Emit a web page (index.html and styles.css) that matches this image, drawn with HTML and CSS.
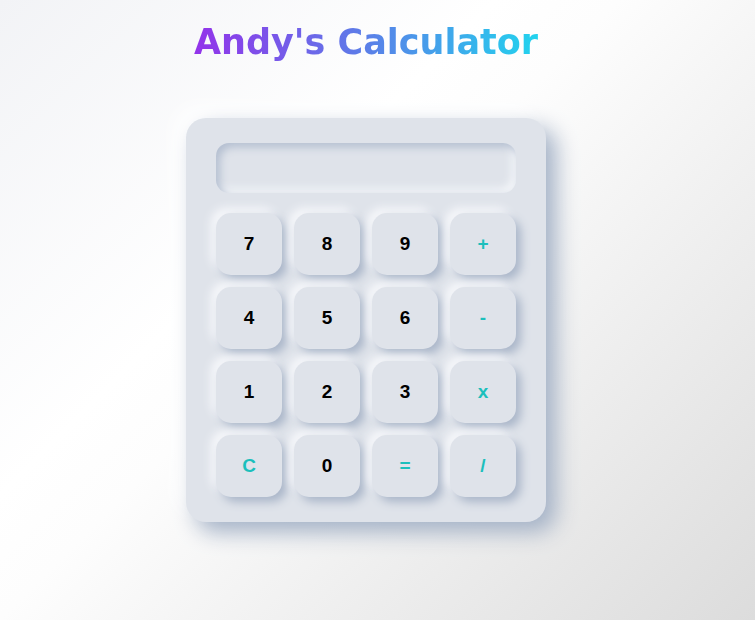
FILE: index.html
```html
<!DOCTYPE html>
<html>
<head>
<meta charset="utf-8">
<link rel="stylesheet" href="styles.css">
</head>
<body>
<div class="page">
  <h1 class="title">Andy's Calculator</h1>
  <div class="calc">
    <div class="display"></div>
    <div class="keys">
      <button class="key">7</button>
      <button class="key">8</button>
      <button class="key">9</button>
      <button class="key op">+</button>
      <button class="key">4</button>
      <button class="key">5</button>
      <button class="key">6</button>
      <button class="key op">-</button>
      <button class="key">1</button>
      <button class="key">2</button>
      <button class="key">3</button>
      <button class="key op">x</button>
      <button class="key op">C</button>
      <button class="key">0</button>
      <button class="key op">=</button>
      <button class="key op">/</button>
    </div>
  </div>
</div>
</body>
</html>
```
FILE: styles.css
```css
html, body {
  margin: 0;
  padding: 0;
  height: 100%;
}
body {
  background: linear-gradient(135deg, #f2f3f6 0%, #ffffff 36%, #fdfdfd 45%, #dcdcdc 100%);
  font-family: "Liberation Sans", Arial, sans-serif;
}
.page {
  width: 732px;
  display: flex;
  flex-direction: column;
  align-items: center;
}
.title {
  margin: 22px 0 0 0;
  font-family: "DejaVu Sans", Verdana, sans-serif;
  font-weight: bold;
  font-size: 35px;
  line-height: 40px;
  background: linear-gradient(90deg, #9333ea, #5b7fe8 50%, #22d3ee);
  -webkit-background-clip: text;
  background-clip: text;
  color: transparent;
}
.calc {
  margin-top: 56px;
  width: 300px;
  padding: 25px 30px;
  background: #dfe3ea;
  border-radius: 20px;
  box-shadow: 10px 10px 22px #a3b1c6, -10px -10px 22px #ffffff;
}
.display {
  height: 50px;
  border-radius: 13px;
  background: #dfe3ea;
  box-shadow: inset 4px 4px 8px #b3bed0, inset -4px -4px 8px #f5f7fa;
  margin-bottom: 20px;
}
.keys {
  display: grid;
  grid-template-columns: repeat(4, 66px);
  grid-auto-rows: 62px;
  gap: 12px;
}
.key {
  border: none;
  border-radius: 15px;
  background: #dfe3ea;
  box-shadow: 5px 5px 10px #aab6c9, -5px -5px 10px #f7f8fb;
  font-family: "Liberation Sans", Arial, sans-serif;
  font-weight: bold;
  font-size: 19px;
  color: #000;
  padding: 0;
}
.key.op {
  color: #1cbfbc;
}
```
